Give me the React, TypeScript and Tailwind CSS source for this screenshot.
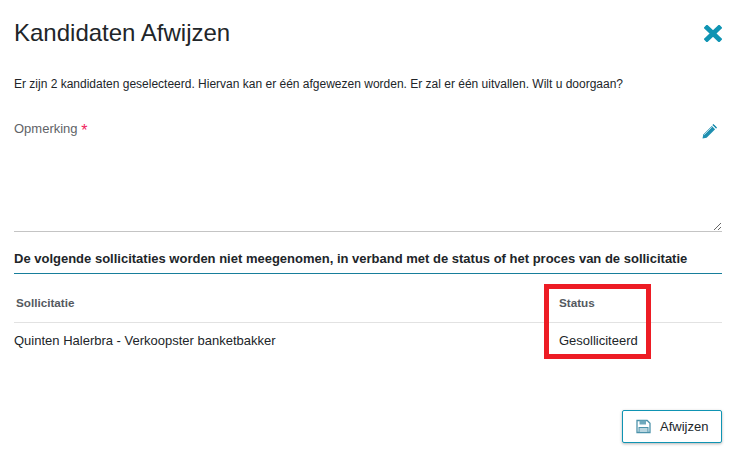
import { useState } from 'react'

const font = { fontFamily: '"Liberation Sans", Arial, sans-serif' }

function CloseIcon() {
  return (
    <svg width="18" height="17" viewBox="0 0 18 17" aria-hidden>
      <path d="M3 2.8 9 8.5M15 2.8 9 8.5M3 14.2 9 8.5M15 14.2 9 8.5" stroke="#0f94b3" strokeWidth="4.8" strokeLinecap="square" fill="none" />
    </svg>
  )
}

function PencilIcon() {
  return (
    <svg width="15" height="15" viewBox="0 0 15 15" aria-hidden>
      <path d="M0.5 14.5 1.3 10.4 9.8 1.9 13.1 5.2 4.6 13.7Z" fill="#1f8fb0" />
      <path d="M10.8 0.9 11.5 0.4 14.6 3.5 14.1 4.2Z" fill="#1f8fb0" stroke="#1f8fb0" />
      <path d="M2.2 10.8 9.8 3.2" stroke="#d6eef4" strokeWidth="0.8" />
    </svg>
  )
}

function SaveIcon() {
  return (
    <svg width="15" height="15" viewBox="0 0 15 15" fill="none" aria-hidden>
      <path d="M1 1.5h10.2L14 4.3V13.5H1Z" stroke="#4d93ab" strokeWidth="1.3" fill="#fff" />
      <rect x="3.5" y="1.5" width="6.5" height="4" fill="#6fa9bd" />
      <rect x="3" y="8.5" width="9" height="5" fill="#b9d6e0" stroke="#4d93ab" />
    </svg>
  )
}

export default function App() {
  const [remark, setRemark] = useState('')

  return (
    <div className="relative h-[460px] w-[742px] overflow-hidden bg-white pl-[14px] pr-[20px]" style={font}>
      <header className="flex h-[66px] items-center justify-between">
        <h1 className="text-[24px] leading-none text-[#212529]">Kandidaten Afwijzen</h1>
        <button type="button" aria-label="Sluiten">
          <CloseIcon />
        </button>
      </header>

      <p className="mt-[11px] text-[12px] leading-[14px] text-[#212529]">
        Er zijn 2 kandidaten geselecteerd. Hiervan kan er één afgewezen worden. Er zal er één uitvallen. Wilt u doorgaan?
      </p>

      <div className="relative mt-[30px] h-[111px] border-b border-[#c4c4c4]">
        <label htmlFor="opmerking" className="block text-[13px] leading-[16px] text-[#5f6368]">
          Opmerking <span className="align-[-3px] text-[16px] leading-none text-[#f0245c]">*</span>
        </label>
        <textarea
          id="opmerking"
          value={remark}
          onChange={(e) => setRemark(e.target.value)}
          className="absolute inset-x-0 bottom-0 h-[88px] resize-y bg-transparent outline-none"
        />
        <span className="absolute right-[5px] top-[3px]">
          <PencilIcon />
        </span>
      </div>

      <h2 className="mt-[19px] border-b border-[#177e9b] pb-[7px] text-[13px] font-bold leading-[15px] text-[#212529]">
        De volgende sollicitaties worden niet meegenomen, in verband met de status of het proces van de sollicitatie
      </h2>

      <div className="grid h-[49px] grid-cols-[543px_1fr] items-center border-b border-[#e2e2e2] pt-[10px] text-[11.7px] font-bold text-[#55595f]">
        <span className="pl-[2px]">Sollicitatie</span>
        <span className="pl-[2px]">Status</span>
      </div>
      <div className="grid h-[36px] grid-cols-[545px_1fr] items-center text-[13px] text-[#212529]">
        <span>Quinten Halerbra - Verkoopster banketbakker</span>
        <span>Gesolliciteerd</span>
      </div>

      <div className="mt-[51px] flex justify-end">
        <button
          type="button"
          className="flex h-[33px] w-[100px] items-center gap-[9px] rounded-[2px] border border-[#0f94b3] bg-white pl-[13px] text-[13px] text-[#212529] shadow-[0_1px_3px_rgba(0,0,0,0.3)]"
        >
          <SaveIcon />
          Afwijzen
        </button>
      </div>

      <div className="pointer-events-none absolute left-[544px] top-[284px] h-[75px] w-[107px] border-[5px] border-[#ed1c24]" />
    </div>
  )
}
